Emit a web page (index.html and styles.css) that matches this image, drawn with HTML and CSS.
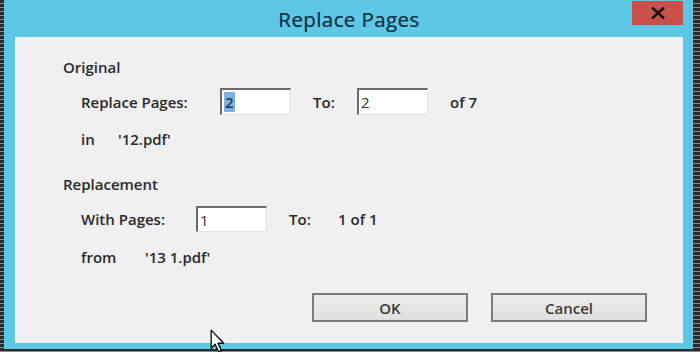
FILE: index.html
```html
<!DOCTYPE html>
<html lang="en">
<head>
    <meta charset="UTF-8">
    <title>Replace Pages</title>
    <link rel="stylesheet" href="styles.css">
</head>
<body>
    <div class="screen">
        <div class="window">
            <div class="titlebar">
                <span></span>
                <h1 class="title">Replace Pages</h1>
                <button class="close" aria-label="Close">
                    <svg width="16" height="12" viewBox="0 0 16 12">
                        <path d="M3 1.5 L13 10.5 M13 1.5 L3 10.5" stroke="#111" stroke-width="2.6" stroke-linecap="square"/>
                    </svg>
                </button>
            </div>
            <div class="content">
                <div class="group-head">Original</div>
                <div class="row row-fields">
                    <span class="label label-replace">Replace Pages:</span>
                    <span class="field"><span class="selected">2</span></span>
                    <span class="label label-to">To:</span>
                    <span class="field">2</span>
                    <span class="label label-of">of 7</span>
                </div>
                <div class="row row-file">
                    <span class="label label-in">in</span>
                    <span class="label">'12.pdf'</span>
                </div>

                <div class="group-head group-second">Replacement</div>
                <div class="row row-fields row-with">
                    <span class="label label-with">With Pages:</span>
                    <span class="field">1</span>
                    <span class="label label-to2">To:</span>
                    <span class="label">1 of 1</span>
                </div>
                <div class="row row-file row-from">
                    <span class="label label-from">from</span>
                    <span class="label">'13 1.pdf'</span>
                </div>

                <div class="actions">
                    <button class="btn">OK</button>
                    <button class="btn">Cancel</button>
                </div>

                <svg class="cursor" width="16" height="25" viewBox="0 0 14 22">
                    <path d="M1 1 L1 17 L4.5 13.5 L7.5 20 L10 19 L7 12.5 L12 12.5 Z" fill="#fff" stroke="#111" stroke-width="1.2" stroke-linejoin="round"/>
                </svg>
            </div>
        </div>
    </div>
</body>
</html>
```

FILE: styles.css
```css
body {
    margin: 0;
    padding: 0;
    background: #141414;
    font-family: 'Open Sans', 'Noto Sans', sans-serif;
    overflow: hidden;
}

.screen {
    height: 352px;
    display: flex;
    padding: 0 7px 3px 4px;
    box-sizing: border-box;
    background: repeating-linear-gradient(to bottom, #2a2a2a 0, #2a2a2a 3px, #8a8a8a 3px, #8a8a8a 4px);
}

.window {
    flex: 1;
    display: flex;
    flex-direction: column;
    background: #5cc8e6;
    padding: 0 10px 6px 11px;
}

.titlebar {
    height: 37px;
    display: grid;
    grid-template-columns: 1fr auto 1fr;
}

.title {
    margin: 0;
    align-self: center;
    font-size: 20.5px;
    font-weight: 400;
    color: #16364a;
    letter-spacing: 0.4px;
    text-shadow: 0 0 0.4px #16364a;
}

.close {
    justify-self: end;
    align-self: start;
    width: 51px;
    height: 24px;
    margin-top: 1px;
    border: none;
    padding: 0;
    background: #c9514c;
    display: flex;
    justify-content: center;
    align-items: center;
}

.content {
    flex: 1;
    position: relative;
    background: #f0eff1;
    padding: 20px 36px 0 48px;
    color: #2a2a2a;
    font-size: 15px;
    font-weight: 600;
}

.group-head {
    height: 20px;
    line-height: 20px;
    display: flex;
    align-items: center;
    gap: 8px;
}

.group-head::after {
    content: "";
    width: 250px;
    height: 1px;
    margin-top: 4px;
    background: #e8e7ea;
}

.group-second {
    margin-top: 25px;
}

.row {
    display: flex;
    align-items: center;
    padding-left: 18px;
}

.row-fields {
    margin-top: 11px;
    height: 27px;
}

.row-with {
    margin-top: 12px;
    height: 26px;
}

.row-file {
    margin-top: 14px;
    height: 20px;
}

.row-from {
    margin-top: 15px;
}

.label {
    white-space: nowrap;
}

.label-replace { width: 139px; }
.label-to { width: 44px; margin-left: 22px; }
.label-of { margin-left: 22px; }
.label-in { width: 37px; }
.label-with { width: 115px; }
.label-to2 { width: 49px; margin-left: 22px; }
.label-from { width: 64px; }

.field {
    width: 71px;
    height: 100%;
    box-sizing: border-box;
    background: #fff;
    border-top: 2px solid #6b6b6b;
    border-left: 2px solid #6b6b6b;
    border-right: 1px solid #e2e2e2;
    border-bottom: 1px solid #e2e2e2;
    padding-left: 2px;
    display: flex;
    align-items: center;
    color: #333;
    font-weight: 400;
}

.selected {
    background: #7db2de;
    color: #1d3956;
    padding: 0 1px;
    line-height: 20px;
    font-weight: 600;
}

.actions {
    margin-top: 26px;
    display: flex;
    justify-content: flex-end;
    gap: 23px;
}

.btn {
    width: 156px;
    height: 29px;
    box-sizing: border-box;
    border: 2px solid #7c7c7c;
    background: linear-gradient(#ececec, #e0e0e0);
    font-family: 'Open Sans', 'Noto Sans', sans-serif;
    font-size: 15px;
    font-weight: 600;
    color: #3a3a3a;
    padding: 0;
}

.cursor {
    position: absolute;
    left: 195px;
    top: 292px;
}
```
